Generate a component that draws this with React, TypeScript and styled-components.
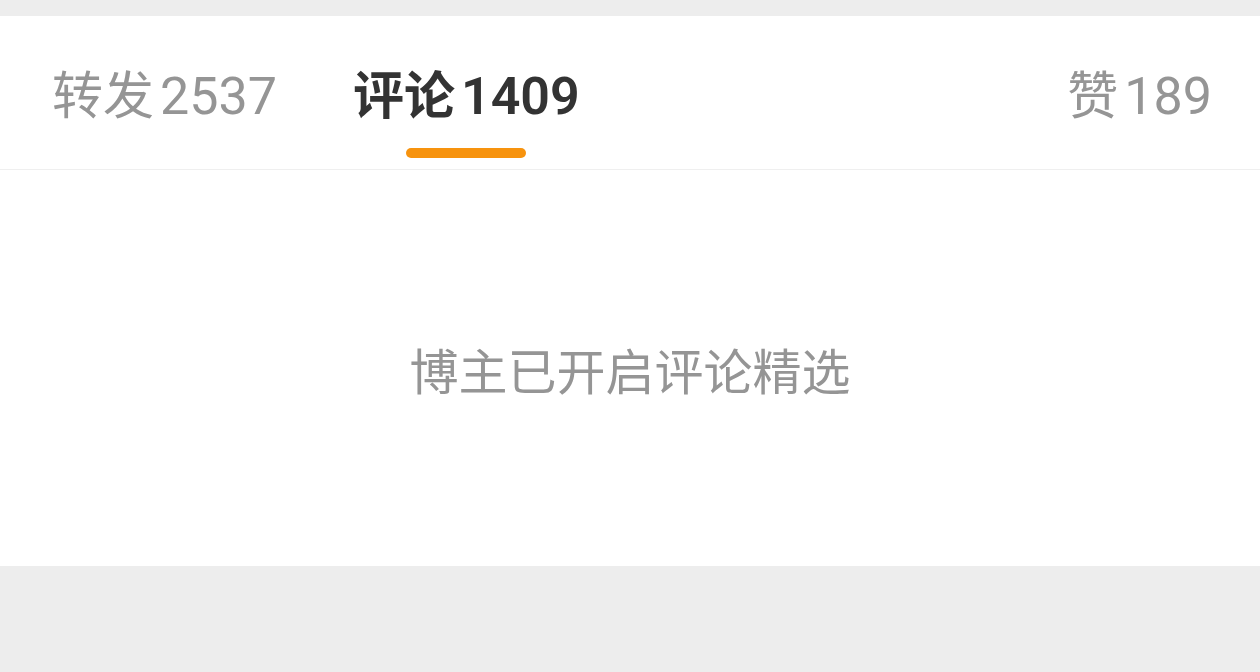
import React from "react";
import styled, { createGlobalStyle } from "styled-components";

const GlobalStyle = createGlobalStyle`
  html, body {
    margin: 0;
    padding: 0;
    background: #ededed;
    font-family: Roboto, "Noto Sans CJK SC", sans-serif;
  }
`;

interface Itab {
  label: string;
  count: number;
  active?: boolean;
  right?: boolean;
}

const tabs: Itab[] = [
  { label: "转发", count: 2537 },
  { label: "评论", count: 1409, active: true },
  { label: "赞", count: 189, right: true },
];

const App = () => {
  return (
    <>
      <GlobalStyle />
      <Page>
        <Panel>
          <TabBar>
            {tabs.map((tab) => (
              <Tab key={tab.label} $active={tab.active} $right={tab.right}>
                <Label>
                  {tab.label}
                  <Count>{tab.count}</Count>
                </Label>
                <Indicator $active={tab.active} />
              </Tab>
            ))}
          </TabBar>
          <Empty>博主已开启评论精选</Empty>
        </Panel>
      </Page>
    </>
  );
};

const Page = styled.div`
  padding-top: 16px;
  height: 672px;
  box-sizing: border-box;
`;

const Panel = styled.div`
  background: #fff;
`;

const TabBar = styled.div`
  display: flex;
  align-items: flex-end;
  gap: 76px;
  height: 154px;
  padding: 0 48px 0 52px;
  border-bottom: 1px solid #efefef;
  box-sizing: border-box;
`;

const Tab = styled.div<{ $active?: boolean; $right?: boolean }>`
  display: flex;
  flex-direction: column;
  align-items: center;
  margin-left: ${(p) => (p.$right ? "auto" : "0")};
  color: ${(p) => (p.$active ? "#333333" : "#959595")};
  font-weight: ${(p) => (p.$active ? 600 : 400)};
`;

const Label = styled.div`
  display: flex;
  align-items: baseline;
  gap: 6px;
  font-size: 51px;
  line-height: 56px;
`;

const Count = styled.span`
  font-size: 52px;
`;

const Indicator = styled.div<{ $active?: boolean }>`
  width: 120px;
  height: 10px;
  margin: 23px 0 11px;
  border-radius: 5px;
  background: ${(p) => (p.$active ? "#f7930e" : "transparent")};
`;

const Empty = styled.div`
  display: flex;
  align-items: center;
  justify-content: center;
  height: 396px;
  font-size: 49px;
  color: #959595;
  font-family: "Noto Sans CJK SC", sans-serif;
`;

export default App;
